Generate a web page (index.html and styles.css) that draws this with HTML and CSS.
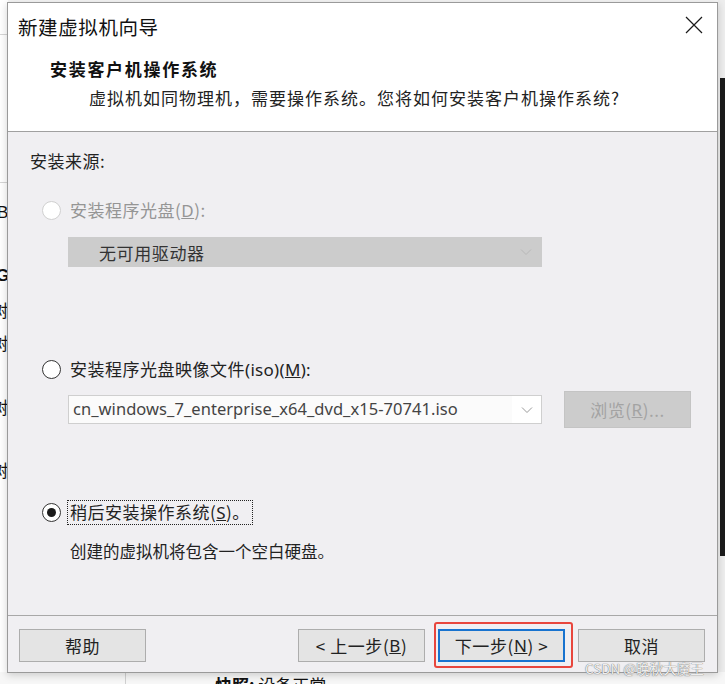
FILE: index.html
```html
<!DOCTYPE html>
<html lang="zh-CN">
<head>
<meta charset="utf-8">
<title>新建虚拟机向导</title>
<link rel="stylesheet" href="styles.css">
</head>
<body>
<div class="desk">
  <div class="bg-left">
    <div class="bg-line l1"></div>
    <div class="bg-line l2"></div>
    <span class="frag f1">B</span>
    <span class="frag f2">Gl</span>
    <span class="frag f3">树</span>
    <span class="frag f4">树</span>
    <span class="frag f5">树</span>
    <span class="frag f6">树</span>
  </div>
  <div class="bg-right">
    <div class="bg-dark"></div>
  </div>
  <div class="bg-bottom">
    <div class="bg-vline"></div>
    <span class="snap"><b>快照:</b> 设备正常</span>
  </div>

  <div class="dialog">
    <div class="titlebar">
      <span class="title">新建虚拟机向导</span>
      <svg class="close" width="18" height="18" viewBox="0 0 18 18"><path d="M1 1 L17 17 M17 1 L1 17" stroke="#1a1a1a" stroke-width="1.2" fill="none"/></svg>
    </div>
    <div class="header">
      <div class="h-title">安装客户机操作系统</div>
      <div class="h-sub">虚拟机如同物理机，需要操作系统。您将如何安装客户机操作系统?</div>
    </div>
    <div class="content">
      <div class="src-label">安装来源:</div>

      <div class="radio-row r1 disabled">
        <span class="radio off"></span>
        <span class="rlabel">安装程序光盘(<u>D</u>):</span>
      </div>
      <div class="select disabled-select">
        <span class="sel-text">无可用驱动器</span>
        <svg class="chev" width="12" height="8" viewBox="0 0 12 8"><path d="M1 1.5 L6 6.5 L11 1.5" stroke="#b8b8b8" stroke-width="1" fill="none"/></svg>
      </div>

      <div class="radio-row r2">
        <span class="radio"></span>
        <span class="rlabel">安装程序光盘映像文件<span class="lat">(iso)(<u>M</u>):</span></span>
      </div>
      <div class="iso-row">
        <div class="iso-field">
          <span class="iso-text">cn_windows_7_enterprise_x64_dvd_x15-70741.iso</span>
          <span class="iso-drop">
            <svg width="12" height="8" viewBox="0 0 12 8"><path d="M1 1.5 L6 6.5 L11 1.5" stroke="#9a9a9a" stroke-width="1" fill="none"/></svg>
          </span>
        </div>
        <div class="browse">浏览(<u>R</u>)...</div>
      </div>

      <div class="radio-row r3">
        <span class="radio on"><span class="dot"></span></span>
        <span class="rlabel focus">稍后安装操作系统(<u>S</u>)。</span>
      </div>
      <div class="desc">创建的虚拟机将包含一个空白硬盘。</div>
    </div>
    <div class="footer">
      <div class="btn">帮助</div>
      <div class="spacer"></div>
      <div class="btn">&lt; 上一步(<u>B</u>)</div>
      <div class="btn primary">下一步(<u>N</u>) &gt;</div>
      <div class="btn">取消</div>
    </div>
  </div>

  <div class="annot"></div>
  <div class="watermark">CSDN @晚秋大魔王</div>
</div>
</body>
</html>
```

FILE: styles.css
```css
* { box-sizing: border-box; }
html, body { margin: 0; padding: 0; }
body {
  width: 725px;
  height: 684px;
  overflow: hidden;
  background: #ffffff;
  font-family: "Noto Sans CJK SC", "Noto Sans", sans-serif;
  color: #1a1a1a;
}
.desk {
  position: relative;
  width: 725px;
  height: 684px;
  overflow: hidden;
  background: #f6f6f6;
}

/* background application fragments */
.bg-left {
  position: absolute;
  left: 0; top: 0;
  width: 8px; height: 684px;
  background: #ffffff;
  overflow: hidden;
}
.bg-line { position: absolute; left: 0; width: 8px; height: 1px; background: #d6d6d6; }
.bg-line.l1 { top: 34px; }
.bg-line.l2 { top: 182px; }
.frag {
  position: absolute;
  font-size: 17px;
  line-height: 20px;
  color: #111;
}
.f1 { top: 203px; left: -3px; font-family: "Liberation Sans", sans-serif; }
.f2 { top: 266px; left: -4px; font-family: "Liberation Sans", sans-serif; font-weight: 700; }
.f3 { top: 300px; left: -9px; }
.f4 { top: 333px; left: -9px; }
.f5 { top: 397px; left: -9px; }
.f6 { top: 460px; left: -9px; }

.bg-right {
  position: absolute;
  right: 0; top: 0;
  width: 7px; height: 684px;
  background: #eeeeee;
}
.bg-dark {
  position: absolute;
  left: 2px; top: 78px;
  width: 5px; height: 478px;
  background: #1b1b1b;
}
.bg-bottom {
  position: absolute;
  left: 0; top: 672px;
  width: 725px; height: 12px;
  background: #f7f7f7;
}
.bg-vline { position: absolute; left: 125px; top: 0; width: 1px; height: 12px; background: #d0d0d0; }
.snap {
  position: absolute;
  left: 215px; top: 3px;
  font-size: 17px;
  line-height: 20px;
  color: #111;
}

/* dialog window */
.dialog {
  position: absolute;
  left: 7px; top: 2px;
  width: 711px; height: 671px;
  border: 1px solid #9a9a9a;
  background: #f0eff2;
  display: flex;
  flex-direction: column;
  box-shadow: 0 2px 8px rgba(0,0,0,0.18);
}
.titlebar {
  height: 46px;
  background: #ffffff;
  display: flex;
  align-items: center;
  justify-content: space-between;
  padding: 0 14px 0 10px;
  flex: none;
}
.title {
  font-size: 19.5px;
  color: #111;
  letter-spacing: 0.6px;
}
.close { margin-top: -2px; }
.header {
  height: 83px;
  background: #ffffff;
  border-bottom: 1px solid #a0a0a0;
  padding: 9px 0 0 42px;
  flex: none;
}
.h-title {
  font-size: 17px;
  font-weight: 700;
  line-height: 22px;
  color: #111;
  letter-spacing: 1.7px;
}
.h-sub {
  margin-top: 7px;
  padding-left: 39px;
  font-size: 17px;
  line-height: 22px;
  color: #222;
  letter-spacing: 1px;
}

.content {
  height: 483px;
  padding-left: 22px;
  flex: none;
  font-size: 17px;
  color: #222;
}
.src-label {
  margin-top: 19px;
  line-height: 20px;
  letter-spacing: 0.5px;
}
.radio-row {
  display: flex;
  align-items: center;
  height: 24px;
  padding-left: 12px;
  gap: 7px;
}
.r1 { margin-top: 27px; }
.r2 { margin-top: 90px; }
.r3 { margin-top: 72px; }
.rlabel { line-height: 22px; letter-spacing: 0.5px; padding: 0 2px; }
.lat { font-family: "Noto Sans", sans-serif; letter-spacing: 0.3px; }
.rlabel u, .btn u, .browse u { font-family: "Noto Sans", sans-serif; }
.disabled .rlabel { color: #959595; }
.radio {
  width: 19px; height: 19px;
  border-radius: 50%;
  border: 1.5px solid #333;
  background: #fff;
  display: flex;
  align-items: center;
  justify-content: center;
  flex: none;
}
.radio.off { border-color: #d0d0d0; }
.radio .dot { width: 9px; height: 9px; border-radius: 50%; background: #1a1a1a; }
.focus { outline: 1px dotted #222; outline-offset: 0; }

.select {
  margin-top: 15px;
  margin-left: 38px;
  width: 474px;
  height: 30px;
  display: flex;
  align-items: center;
  justify-content: space-between;
  padding: 0 10px 0 31px;
}
.disabled-select { background: #cccccc; }
.sel-text { color: #333; letter-spacing: 0.6px; }

.iso-row {
  margin-top: 10px;
  margin-left: 38px;
  display: flex;
  align-items: center;
  gap: 22px;
  height: 37px;
}
.iso-field {
  width: 474px;
  height: 29px;
  background: #fff;
  border: 1px solid #cfcfcf;
  display: flex;
  align-items: center;
}
.iso-text {
  flex: 1;
  padding-left: 4px;
  font-family: "Noto Sans", sans-serif;
  font-size: 16.5px;
  color: #444;
  letter-spacing: 0.05px;
  background: #fbfbfb;
  height: 100%;
  line-height: 26px;
}
.iso-drop {
  width: 29px; height: 100%;
  display: flex;
  align-items: center;
  justify-content: center;
}
.browse {
  width: 127px;
  height: 37px;
  background: #cccccc;
  border: 1px solid #c4c4c4;
  display: flex;
  align-items: center;
  justify-content: center;
  color: #a3a3a3;
  letter-spacing: 0.5px;
}
.desc {
  margin-top: 17px;
  padding-left: 40px;
  line-height: 20px;
  font-size: 16.5px;
  letter-spacing: 0;
}

.footer {
  flex: 1;
  border-top: 1px solid #a8a8a8;
  display: flex;
  align-items: flex-start;
  padding: 13px 12px 0 11px;
  gap: 13px;
  background: #f0eff2;
}
.spacer { flex: 1; }
.btn {
  width: 127px;
  height: 33px;
  background: #e4e4e4;
  border: 1px solid #adadad;
  display: flex;
  align-items: center;
  justify-content: center;
  font-size: 17px;
  color: #222;
  letter-spacing: 0.6px;
}
.btn.primary {
  border: 2px solid #1873cf;
}

.annot {
  position: absolute;
  left: 434px; top: 622px;
  width: 139px; height: 46px;
  border: 2px solid #e8463d;
  border-radius: 3px;
}
.watermark {
  position: absolute;
  left: 585px; top: 659px;
  font-size: 13.5px;
  line-height: 18px;
  color: rgba(255,255,255,0.9);
  text-shadow: 0 0 1px #777, 0 0 1px #777;
  font-family: "Noto Sans CJK SC", sans-serif;
}
```
